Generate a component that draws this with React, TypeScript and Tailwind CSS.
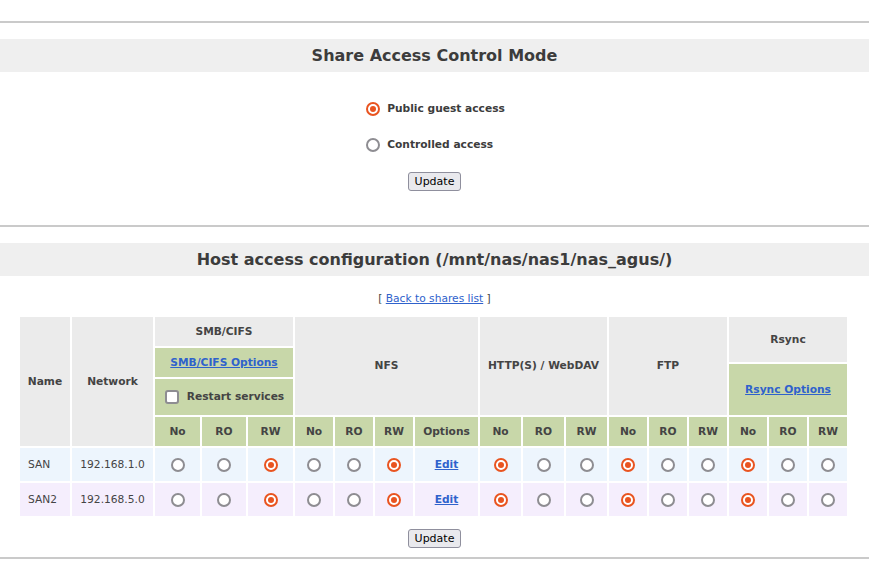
import React from "react";

type RadioProps = { checked?: boolean };

const Radio: React.FC<RadioProps> = ({ checked }) => {
  if (checked) {
    return (
      <span className="flex h-[14px] w-[14px] shrink-0 items-center justify-center rounded-full border-2 border-[#e95420] bg-white">
        <span className="h-[6px] w-[6px] rounded-full bg-[#e95420]" />
      </span>
    );
  }
  return <span className="block h-[14px] w-[14px] shrink-0 rounded-full border-2 border-[#8e8d92] bg-white" />;
};

const UpdateButton = () => (
  <div className="flex justify-center">
    <button className="h-[19px] rounded-[3px] border border-[#8f8f9d] bg-[#e9e9ed] px-[6px] text-[11px] leading-none text-black">
      Update
    </button>
  </div>
);

const Band: React.FC<{ title: string; className?: string }> = ({ title, className }) => (
  <div className={"flex h-[33px] items-center justify-center bg-[#efefef] " + (className ?? "")}>
    <h2 className="text-[16px] font-bold text-[#3c3c3c]">{title}</h2>
  </div>
);

const Rule: React.FC<{ className?: string }> = ({ className }) => (
  <div className={"h-[2px] bg-[#cacaca] " + (className ?? "")} />
);

type Host = {
  name: string;
  network: string;
  smb: number;
  nfs: number;
  http: number;
  ftp: number;
  rsync: number;
  bg: string;
};

const hosts: Host[] = [
  { name: "SAN", network: "192.168.1.0", smb: 2, nfs: 2, http: 0, ftp: 0, rsync: 0, bg: "bg-[#edf5fd]" },
  { name: "SAN2", network: "192.168.5.0", smb: 2, nfs: 2, http: 0, ftp: 0, rsync: 0, bg: "bg-[#f5eefd]" },
];

const gray = "flex items-center justify-center bg-[#ebebeb] font-bold";
const green = "flex items-center justify-center bg-[#c8d7a9] font-bold";
const link = "font-bold text-[#2f62cc] underline";

const HostRow: React.FC<{ host: Host }> = ({ host }) => {
  const cell = "flex items-center justify-center " + host.bg;
  const group = (sel: number, key: string) =>
    [0, 1, 2].map((i) => (
      <div key={key + i} className={cell}>
        <Radio checked={sel === i} />
      </div>
    ));
  return (
    <>
      <div className={"flex items-center pl-[8px] " + host.bg}>{host.name}</div>
      <div className={cell}>{host.network}</div>
      {group(host.smb, "smb")}
      {group(host.nfs, "nfs")}
      <div className={cell}>
        <a href="#" className={link}>Edit</a>
      </div>
      {group(host.http, "http")}
      {group(host.ftp, "ftp")}
      {group(host.rsync, "rsync")}
    </>
  );
};

const sub = ["No", "RO", "RW"];

const HostTable = () => (
  <div className="grid w-fit grid-cols-[50px_81px_45px_44px_45px_38px_38px_38px_63px_41px_41px_41px_38px_38px_38px_38px_38px_38px] grid-rows-[29px_14px_13px_36px_29px_33px_33px] gap-[2px] text-[10.667px] text-[#444]">
    <div className={gray + " col-start-1 row-start-1 row-span-5"}>Name</div>
    <div className={gray + " col-start-2 row-start-1 row-span-5"}>Network</div>
    <div className={gray + " col-start-3 col-span-3 row-start-1"}>SMB/CIFS</div>
    <div className={green + " col-start-3 col-span-3 row-start-2 row-span-2"}>
      <a href="#" className={link}>SMB/CIFS Options</a>
    </div>
    <div className={green + " col-start-3 col-span-3 row-start-4 gap-[8px] pl-[1px]"}>
      <span className="h-[14px] w-[14px] rounded-[3px] border-2 border-[#8e8d92] bg-white" />
      Restart services
    </div>
    <div className={gray + " col-start-6 col-span-4 row-start-1 row-span-4"}>NFS</div>
    <div className={gray + " col-start-10 col-span-3 row-start-1 row-span-4"}>HTTP(S) / WebDAV</div>
    <div className={gray + " col-start-13 col-span-3 row-start-1 row-span-4"}>FTP</div>
    <div className={gray + " col-start-16 col-span-3 row-start-1 row-span-2"}>Rsync</div>
    <div className={green + " col-start-16 col-span-3 row-start-3 row-span-2"}>
      <a href="#" className={link}>Rsync Options</a>
    </div>

    {sub.map((s) => <div key={"h1" + s} className={green}>{s}</div>)}
    {sub.map((s) => <div key={"h2" + s} className={green}>{s}</div>)}
    <div className={green}>Options</div>
    {sub.map((s) => <div key={"h3" + s} className={green}>{s}</div>)}
    {sub.map((s) => <div key={"h4" + s} className={green}>{s}</div>)}
    {sub.map((s) => <div key={"h5" + s} className={green}>{s}</div>)}

    {hosts.map((h) => <HostRow key={h.name} host={h} />)}
  </div>
);

export default function App() {
  return (
    <div className="min-h-[568px] bg-white pt-[21px] font-['DejaVu_Sans',sans-serif] text-[#444]">
      <Rule />
      <Band title="Share Access Control Mode" className="mt-[16px]" />

      <div className="mx-auto mt-[30px] flex w-fit flex-col gap-[22px] pl-[2px] text-[10.667px] font-bold text-[#3c3c3c]">
        <label className="flex h-[14px] items-center gap-[7px]">
          <Radio checked />
          Public guest access
        </label>
        <label className="flex h-[14px] items-center gap-[7px]">
          <Radio />
          Controlled access
        </label>
      </div>
      <div className="mt-[20px]">
        <UpdateButton />
      </div>

      <Rule className="mt-[34px]" />
      <Band title="Host access configuration (/mnt/nas/nas1/nas_agus/)" className="mt-[16px]" />

      <p className="mt-[16px] h-[14px] text-center text-[10.667px] leading-[14px] text-[#444]">
        [ <a href="#" className="text-[#2f62cc] underline">Back to shares list</a> ]
      </p>

      <div className="mt-[11px] flex justify-center pr-[2px]">
        <HostTable />
      </div>

      <div className="mt-[13px]">
        <UpdateButton />
      </div>
      <Rule className="mt-[9px]" />
    </div>
  );
}
